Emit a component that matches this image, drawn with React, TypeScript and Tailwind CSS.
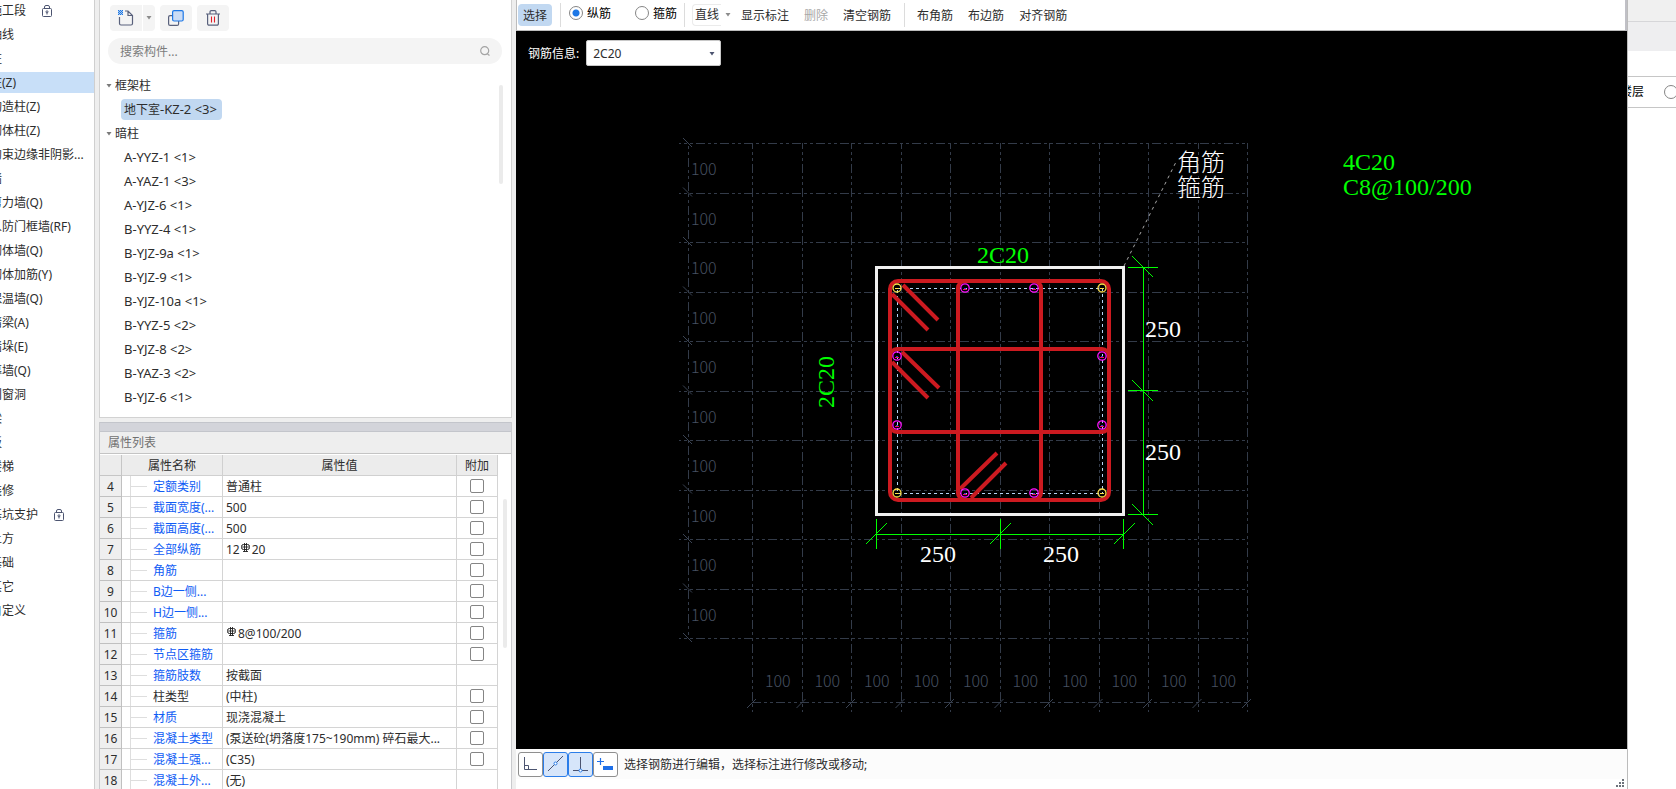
import React from "react";

type Category = { name: string; locked?: boolean; active?: boolean };

const categories: Category[] = [
  { name: "施工段", locked: true },
  { name: "轴线" },
  { name: "柱" },
  { name: "柱(Z)", active: true },
  { name: "构造柱(Z)" },
  { name: "砌体柱(Z)" },
  { name: "约束边缘非阴影..." },
  { name: "墙" },
  { name: "剪力墙(Q)" },
  { name: "人防门框墙(RF)" },
  { name: "砌体墙(Q)" },
  { name: "砌体加筋(Y)" },
  { name: "保温墙(Q)" },
  { name: "暗梁(A)" },
  { name: "墙垛(E)" },
  { name: "幕墙(Q)" },
  { name: "门窗洞" },
  { name: "梁" },
  { name: "板" },
  { name: "楼梯" },
  { name: "装修" },
  { name: "基坑支护", locked: true },
  { name: "土方" },
  { name: "基础" },
  { name: "其它" },
  { name: "自定义" },
];

type TreeItem = { prefix?: string; label: string; selected?: boolean };

const tree: { group: string; items: TreeItem[] }[] = [
  { group: "框架柱", items: [{ prefix: "地下室", label: "-KZ-2 <3>", selected: true }] },
  {
    group: "暗柱",
    items: [
      { label: "A-YYZ-1 <1>" },
      { label: "A-YAZ-1 <3>" },
      { label: "A-YJZ-6 <1>" },
      { label: "B-YYZ-4 <1>" },
      { label: "B-YJZ-9a <1>" },
      { label: "B-YJZ-9 <1>" },
      { label: "B-YJZ-10a <1>" },
      { label: "B-YYZ-5 <2>" },
      { label: "B-YJZ-8 <2>" },
      { label: "B-YAZ-3 <2>" },
      { label: "B-YJZ-6 <1>" },
    ],
  },
];

type Property = {
  no: number;
  name: string;
  value: React.ReactNode;
  plain?: boolean;
  noCheck?: boolean;
};

function RebarMark() {
  return (
    <svg
      width="9"
      height="10"
      viewBox="0 0 9 10"
      className="mr-0.5 mb-1 ml-px"
      fill="none"
      stroke="#222"
      aria-hidden="true"
    >
      <rect x="0.5" y="1.5" width="8" height="5" rx="2" />
      <path d="M1 4H8M3.5 0V9M5.5 0V9M2 8.5H7" strokeWidth="0.9" />
    </svg>
  );
}

const properties: Property[] = [
  { no: 4, name: "定额类别", value: "普通柱" },
  { no: 5, name: "截面宽度(...", value: "500" },
  { no: 6, name: "截面高度(...", value: "500" },
  { no: 7, name: "全部纵筋", value: <>12<RebarMark />20</> },
  { no: 8, name: "角筋", value: "" },
  { no: 9, name: "B边一侧...", value: "" },
  { no: 10, name: "H边一侧...", value: "" },
  { no: 11, name: "箍筋", value: <><RebarMark />8@100/200</> },
  { no: 12, name: "节点区箍筋", value: "" },
  { no: 13, name: "箍筋肢数", value: "按截面", noCheck: true },
  { no: 14, name: "柱类型", value: "(中柱)", plain: true },
  { no: 15, name: "材质", value: "现浇混凝土" },
  { no: 16, name: "混凝土类型", value: "(泵送砼(坍落度175~190mm) 碎石最大..." },
  { no: 17, name: "混凝土强...", value: "(C35)" },
  { no: 18, name: "混凝土外...", value: "(无)", noCheck: true },
];

function LockIcon() {
  return (
    <svg width="10" height="12" viewBox="0 0 10 12" fill="none" stroke="#4c5470" aria-hidden="true">
      <rect x="0.5" y="3.5" width="9" height="8" rx="1" />
      <path d="M2.5 3.5V2a1.5 1.5 0 0 1 1.5-1.5H6A1.5 1.5 0 0 1 7.5 2V3.5" />
      <circle cx="5" cy="6.8" r="1" />
      <path d="M5 7.5v2" />
    </svg>
  );
}

function Caret({ className = "" }: { className?: string }) {
  return (
    <svg width="6" height="4" viewBox="0 0 6 4" className={className} aria-hidden="true">
      <path d="M0.5 0H5.5L3 3.5Z" fill="currentColor" />
    </svg>
  );
}

function CategoryList() {
  return (
    <nav className="w-[95px] shrink-0 overflow-hidden border-r border-[#cfcfcf] bg-white">
      <ul className="-mt-0.5">
        {categories.map((c) => (
          <li key={c.name} className="flex h-6 items-center">
            <a
              href="#"
              className={
                c.active
                  ? "flex h-[21px] w-full items-center gap-4 bg-[#c8dff8] pt-0.5 whitespace-nowrap"
                  : "flex h-[21px] w-full items-center gap-4 pt-0.5 whitespace-nowrap"
              }
            >
              <span className="-ml-2.5">{c.name}</span>
              {c.locked && <LockIcon />}
            </a>
          </li>
        ))}
      </ul>
    </nav>
  );
}

function ComponentPanel() {
  return (
    <section className="h-[418px] shrink-0 border-x border-b border-[#d2d2d2] bg-white">
      <div className="flex pt-[5px] pl-2.5">
        <button aria-label="新建" className="flex h-[26px] w-8 items-center justify-center rounded-l bg-[#f4f4f4]">
          <svg width="16" height="16" viewBox="0 0 16 16" fill="none" aria-hidden="true">
            <path
              d="M1.5 7V13.5a1.5 1.5 0 0 0 1.5 1.5H13a1.5 1.5 0 0 0 1.5-1.5V5.5L10 1H7M10 1V5.5H14.5"
              stroke="#59617c"
              strokeWidth="1.2"
            />
            <path
              d="M0 0h1v1H0zM2 0h1v1H2zM4 0h1v1H4zM1 1h1v1H1zM3 1h1v1H3zM0 2h1v1H0zM2 2h1v1H2zM4 2h1v1H4zM1 3h1v1H1zM3 3h1v1H3zM0 4h1v1H0zM2 4h1v1H2zM4 4h1v1H4z"
              fill="#1e78e6"
            />
            <rect width="5" height="5" fill="#1e78e6" opacity="0.35" />
          </svg>
        </button>
        <button aria-label="新建选项" className="ml-px flex h-[26px] w-3 items-center justify-center rounded-r bg-[#f4f4f4] text-[#8c8c8c]">
          <Caret />
        </button>
        <button aria-label="复制" className="ml-[5px] flex h-[26px] w-8 items-center justify-center rounded bg-[#f4f4f4]">
          <svg width="16" height="16" viewBox="0 0 16 16" fill="none" aria-hidden="true">
            <rect x="0.6" y="5.6" width="10" height="9.8" rx="1.5" stroke="#59617c" strokeWidth="1.2" />
            <rect x="4.6" y="0.6" width="10.6" height="10.4" rx="1.5" fill="#cbdcf5" stroke="#1e78e6" strokeWidth="1.2" />
          </svg>
        </button>
        <button aria-label="删除构件" className="ml-[5px] flex h-[26px] w-8 items-center justify-center rounded bg-[#f4f4f4]">
          <svg width="16" height="16" viewBox="0 0 16 16" fill="none" aria-hidden="true">
            <path
              d="M1 4H15M5 4V1.8A1.2 1.2 0 0 1 6.2 .7H9.8A1.2 1.2 0 0 1 11 1.8V4M2.6 4V13.8A1.4 1.4 0 0 0 4 15.2H12A1.4 1.4 0 0 0 13.4 13.8V4"
              stroke="#59617c"
              strokeWidth="1.2"
            />
            <path d="M6.5 6.5V12.5M9.5 6.5V12.5" stroke="#e02028" strokeWidth="1.1" />
          </svg>
        </button>
      </div>
      <label className="mt-[7px] mr-[9px] ml-2 flex h-[26px] items-center rounded-full bg-[#f4f4f4] pr-3 pl-3">
        <input
          type="text"
          aria-label="搜索构件"
          placeholder="搜索构件..."
          className="min-w-0 flex-1 bg-transparent pt-0.5 outline-none placeholder:text-[#7c7c7c]"
        />
        <svg width="10" height="10" viewBox="0 0 10 10" fill="none" stroke="#a4a4a4" strokeWidth="1.2" aria-hidden="true">
          <circle cx="4.7" cy="4.7" r="4" />
          <path d="M7.5 8L9.5 9.5" />
        </svg>
      </label>
      <div className="mt-[9px] flex justify-between pr-2">
        <ul>
          {tree.map((g) => (
            <li key={g.group}>
              <div className="flex h-6 items-center gap-[3px] pt-0.5 pl-1.5">
                <Caret className="text-[#7a7a7a]" />
                <span>{g.group}</span>
              </div>
              <ul>
                {g.items.map((it) => (
                  <li key={it.label} className="flex h-6 items-center pl-[21px] text-[13px]">
                    <span
                      className={
                        it.selected
                          ? "flex h-[21px] items-center rounded-sm bg-[#c1d8f1] pt-0.5 pr-[5px] pl-[3px]"
                          : "flex h-[21px] items-center pt-0.5 pl-[3px]"
                      }
                    >
                      {it.prefix && <span className="text-xs">{it.prefix}</span>}
                      {it.label}
                    </span>
                  </li>
                ))}
              </ul>
            </li>
          ))}
        </ul>
        <div className="mt-3 h-[99px] w-1 rounded-full bg-[#ebebeb]" />
      </div>
    </section>
  );
}

function PropertyPanel() {
  return (
    <section className="mt-1 flex min-h-0 flex-1 flex-col overflow-hidden border-x border-[#c9cacd] bg-white">
      <div className="h-2.5 shrink-0 border-y border-[#c3c5cb] bg-[#d3d4da]" />
      <h2 className="flex h-[22px] shrink-0 items-center border-b border-[#c4c4c4] bg-[#eeeeee] pl-2 text-[#707070]">
        属性列表
      </h2>
      <div className="flex pt-px">
        <table className="flex-1 table-fixed border-separate border-spacing-0">
          <colgroup>
            <col className="w-[22px]" />
            <col className="w-[101px]" />
            <col />
            <col className="w-[41px]" />
          </colgroup>
          <thead>
            <tr className="h-[21px] bg-[#ececec]">
              <th className="border-r border-b border-[#c6c6c6] p-0" aria-label="序号" />
              <th className="border-r border-b border-[#d0d0d0] p-0 pt-0.5 font-normal">属性名称</th>
              <th className="border-r border-b border-[#d0d0d0] p-0 pt-0.5 font-normal">属性值</th>
              <th className="border-r border-b border-[#d0d0d0] p-0 pt-0.5 font-normal">附加</th>
            </tr>
          </thead>
          <tbody>
            {properties.map((p) => (
              <tr key={p.no} className="h-[21px]">
                <td className="border-r border-b border-[#c0c0c0] bg-[#efefef] p-0 pt-0.5 text-center">{p.no}</td>
                <td className="border-r border-b border-[#d4d4d4] p-0">
                  <div className="flex h-5 items-center">
                    <span className="h-5 w-[9px] border-r border-[#dedede]" />
                    <span className="h-px w-4 bg-[#dedede]" />
                    <span
                      className={
                        p.plain
                          ? "ml-1.5 pt-0.5 whitespace-nowrap"
                          : "ml-1.5 pt-0.5 whitespace-nowrap text-[#0f5cf5]"
                      }
                    >
                      {p.name}
                    </span>
                  </div>
                </td>
                <td className="border-r border-b border-[#d4d4d4] p-0 pl-[3px]">
                  <div className="flex h-5 items-center pt-0.5 whitespace-nowrap">{p.value}</div>
                </td>
                <td className="border-r border-b border-[#d4d4d4] p-0">
                  <div className="flex h-5 items-center justify-center">
                    {!p.noCheck && (
                      <input
                        type="checkbox"
                        aria-label={p.name}
                        className="size-3.5 appearance-none rounded-xs border border-[#858585] bg-white checked:bg-[#2b7de9]"
                      />
                    )}
                  </div>
                </td>
              </tr>
            ))}
          </tbody>
        </table>
        <div className="mt-11 mr-1 ml-[5px] h-[149px] w-1 rounded-full bg-[#ebebeb]" />
      </div>
    </section>
  );
}

function Radio({ label, checked }: { label: string; checked?: boolean }) {
  return (
    <label className="flex items-center gap-1 text-black">
      <input
        type="radio"
        name="bar"
        defaultChecked={checked}
        className="size-3.5 appearance-none rounded-full border border-[#858585] bg-white checked:bg-[radial-gradient(#1e78e6_0_3px,#fff_4px)]"
      />
      <span className="pt-px">{label}</span>
    </label>
  );
}

function Toolbar() {
  return (
    <div className="flex h-[31px] shrink-0 items-center border-r-2 border-b border-l border-r-[#c0c0c6] border-b-[#bcbcbc] border-l-[#bcbcbc] bg-white whitespace-nowrap">
      <button className="ml-px h-[22px] w-[34px] rounded-sm bg-[#c1d8f1] pt-0.5">选择</button>
      <span className="ml-2 h-6 w-px bg-[#dcdcdc]" />
      <div className="ml-2 flex gap-6 pb-1">
        <Radio label="纵筋" checked />
        <Radio label="箍筋" />
      </div>
      <span className="ml-[7px] h-6 w-px bg-[#dcdcdc]" />
      <button className="ml-[7px] h-[22px] rounded-l-sm border border-r-0 border-[#ebebeb] px-0.5">直线</button>
      <button aria-label="绘制方式" className="ml-1 flex h-[22px] w-2 items-center text-[#8c8c8c]">
        <Caret />
      </button>
      <div className="ml-2 flex gap-[15px] pt-0.5">
        <button>显示标注</button>
        <button className="text-[#a8a8a8]">删除</button>
        <button>清空钢筋</button>
      </div>
      <span className="ml-[13px] h-6 w-px bg-[#dcdcdc]" />
      <div className="ml-3 flex gap-[15px] pt-0.5">
        <button>布角筋</button>
        <button>布边筋</button>
        <button>对齐钢筋</button>
      </div>
    </div>
  );
}

const STEP = 49.5;
const steps = Array.from({ length: 11 }, (_, i) => i);
const cells = Array.from({ length: 10 }, (_, i) => i);
const cornerBars = [
  [897, 288],
  [1102, 288],
  [897, 493],
  [1102, 493],
];
const sideBars = [
  [965, 288],
  [1034, 288],
  [965, 493],
  [1034, 493],
  [897, 356],
  [897, 425],
  [1102, 356],
  [1102, 425],
];

function SectionDrawing() {
  return (
    <svg className="absolute inset-0 h-full w-full" aria-label="柱截面">
      <g transform="translate(-516 -31)">
        <g stroke="#333b49" strokeDasharray="9 3 3 3 3 3" shapeRendering="crispEdges">
          {steps.map((i) => {
            const y = Math.ceil(143 + STEP * i) + 0.5;
            return <line key={i} x1="679" x2="1247" y1={y} y2={y} strokeDashoffset="7" />;
          })}
          {steps.map((i) => {
            const x = Math.ceil(752 + STEP * i) + 0.5;
            return <line key={i} x1={x} x2={x} y1="143" y2="712" strokeDashoffset="3" />;
          })}
          <line x1="688.5" x2="688.5" y1="143" y2="638" strokeDashoffset="9" />
          <line x1="752" x2="1247" y1="702.5" y2="702.5" />
        </g>
        <g stroke="#3b4454">
          {steps.map((i) => (
            <path key={i} d={`M683 ${138 + STEP * i}l9 9M${747 + STEP * i} 708l9 -9`} />
          ))}
        </g>
        <g fill="#465061" className="font-['Noto_Sans_CJK_SC',sans-serif] text-base font-light">
          {cells.map((i) => (
            <text key={i} x="691" y={175 + STEP * i}>100</text>
          ))}
          {cells.map((i) => (
            <text key={i} x={765 + STEP * i} y="687">100</text>
          ))}
        </g>

        <rect x="897.5" y="288.5" width="205" height="205" fill="none" stroke="#b5d3f5" strokeDasharray="3 3" shapeRendering="crispEdges" />
        <rect x="876.5" y="267.5" width="247" height="247" fill="none" stroke="#f0f0f0" strokeWidth="3" shapeRendering="crispEdges" />

        <g fill="none" stroke="#cc1a20" strokeWidth="4">
          <rect x="890" y="281" width="219" height="219" rx="8" />
          <rect x="958" y="281" width="83" height="219" rx="7" />
          <rect x="890" y="349" width="219" height="83" rx="7" />
          <path d="M903 285L938 320M892 294L928 330M902 352L939 388M892 362L928 398M960 489L997 453M971 498L1006 463" />
        </g>

        {cornerBars.map(([x, y]) => (
          <g key={`${x}-${y}`}>
            <circle cx={x} cy={y} r="4" fill="none" stroke="#ffe14a" strokeWidth="1.3" />
            <path d={`M${x - 2} ${y + 0.5}h4`} stroke="#ffe14a" />
          </g>
        ))}
        {sideBars.map(([x, y]) => (
          <g key={`${x}-${y}`}>
            <circle cx={x} cy={y} r="4.2" fill="none" stroke="#ff10ff" strokeWidth="1.3" />
            <path d={`M${x - 2} ${y + 1.5}h4`} stroke="#f01060" />
            <path d={`M${x - 1} ${y + 0.5}h2`} stroke="#4030e0" />
          </g>
        ))}

        <g stroke="#00ff00" shapeRendering="crispEdges">
          <path d="M1143.5 267V515M876 534.5H1124" />
          <path d="M1128 267.5H1158M1128 390.5H1158M1128 514.5H1158" />
          <path d="M876.5 519V549M1000.5 519V549M1123.5 519V549" />
        </g>
        <g stroke="#00ff00">
          <path d="M1132 256l21 21M1132 380l21 21M1132 504l21 21" />
          <path d="M866 544l21 -21M990 544l21 -21M1114 544l21 -21" />
        </g>
        <line x1="1124" y1="266" x2="1176" y2="162" stroke="#a8a8a8" strokeDasharray="3 4" />

        <g className="font-['Liberation_Serif','Noto_Sans_CJK_SC',serif] text-2xl">
          <g fill="#00ff00">
            <text x="977" y="263">2C20</text>
            <text transform="translate(834 408) rotate(-90)">2C20</text>
            <text x="1343" y="170">4C20</text>
            <text x="1343" y="195">C8@100/200</text>
          </g>
          <g fill="#ffffff">
            <text x="1145" y="337">250</text>
            <text x="1145" y="460">250</text>
            <text x="920" y="562">250</text>
            <text x="1043" y="562">250</text>
            <text x="1177" y="171" className="font-light">角筋</text>
            <text x="1177" y="196" className="font-light">箍筋</text>
          </g>
        </g>
      </g>
    </svg>
  );
}

const idleTool = "flex size-[25px] items-center justify-center rounded-[3px] border border-[#8f8f8f] bg-white";
const activeTool = "flex size-[25px] items-center justify-center rounded-[3px] border border-[#2b7de9] bg-[#d6e5fa]";

function StatusBar() {
  return (
    <div className="flex h-10 shrink-0 flex-col bg-white">
      <div className="flex h-[30px] items-center bg-[#fcfcfc] pl-0.5">
        <button aria-label="正交" className={idleTool}>
          <svg width="15" height="15" viewBox="0 0 15 15" fill="none" stroke="#4c5470" aria-hidden="true">
            <path d="M1.5 0V12.5H14M1.5 8.5H5.5V12.5" />
          </svg>
        </button>
        <button aria-label="中点" className={activeTool}>
          <svg width="17" height="17" viewBox="0 0 17 17" fill="none" aria-hidden="true">
            <path d="M1 15L16 0" stroke="#4c5470" />
            <circle cx="8.5" cy="7.5" r="1.5" fill="#fff" stroke="#2b7de9" />
          </svg>
        </button>
        <button aria-label="垂点" className={activeTool}>
          <svg width="17" height="17" viewBox="0 0 17 17" fill="none" aria-hidden="true">
            <path d="M8.5 1V14M1 14.5H16" stroke="#4c5470" />
            <circle cx="8.5" cy="14.5" r="1.5" fill="#fff" stroke="#2b7de9" />
          </svg>
        </button>
        <button aria-label="动态输入" className={idleTool}>
          <svg width="17" height="15" viewBox="0 0 17 15" fill="none" stroke="#1e6fe8" aria-hidden="true">
            <path d="M3.5 1V8M0 4.5H7" strokeWidth="1.2" />
            <rect x="6.5" y="9.5" width="9" height="3" fill="#1e6fe8" />
          </svg>
        </button>
        <span className="ml-1.5 pt-0.5">选择钢筋进行编辑，选择标注进行修改或移动;</span>
      </div>
      <div className="flex justify-end pr-[3px]">
        <svg width="8" height="8" viewBox="0 0 8 8" fill="#6d737b" aria-hidden="true">
          <path d="M6 0h2v2H6zM3 3h2v2H3zM6 3h2v2H6zM0 6h2v2H0zM3 6h2v2H3zM6 6h2v2H6z" />
        </svg>
      </div>
    </div>
  );
}

function Editor() {
  return (
    <main className="flex min-w-0 flex-1 flex-col">
      <Toolbar />
      <div className="relative min-h-0 flex-1 overflow-hidden bg-black">
        <SectionDrawing />
        <div className="relative flex items-center gap-[7px] pt-[9px] pl-3">
          <label htmlFor="bar-info" className="pt-0.5 text-white">
            钢筋信息:
          </label>
          <div className="relative">
            <select
              id="bar-info"
              className="h-[26px] w-[135px] appearance-none rounded-xs border border-[#c8c8c8] bg-white pt-0.5 pl-1.5 outline-none"
            >
              <option>2C20</option>
            </select>
            <Caret className="pointer-events-none absolute top-3 right-1.5 text-[#4c5470]" />
          </div>
        </div>
      </div>
      <StatusBar />
    </main>
  );
}

function SidePanel() {
  return (
    <aside className="w-[49px] shrink-0 overflow-hidden border-l border-[#bcbcbc] bg-white">
      <div className="h-[22px] border-b border-[#d6d6d9] bg-[#f0f0f0]" />
      <div className="h-[29px] bg-[#eeeef0]" />
      <div className="mt-[25px] flex h-8 items-center border-y border-[#c6c6c6] text-black">
        <label className="-ml-2 flex shrink-0 items-center gap-5 whitespace-nowrap">
          楼层
          <input
            type="radio"
            name="floor"
            className="size-3.5 shrink-0 appearance-none rounded-full border border-[#858585] bg-white"
          />
        </label>
      </div>
    </aside>
  );
}

export default function App() {
  return (
    <div className="flex h-screen overflow-hidden bg-[#eeeeee] font-['Noto_Sans','Noto_Sans_CJK_SC',sans-serif] text-xs text-[#2d2d2d]">
      <CategoryList />
      <div className="mr-1 ml-1 flex w-[413px] shrink-0 flex-col">
        <ComponentPanel />
        <PropertyPanel />
      </div>
      <Editor />
      <SidePanel />
    </div>
  );
}
